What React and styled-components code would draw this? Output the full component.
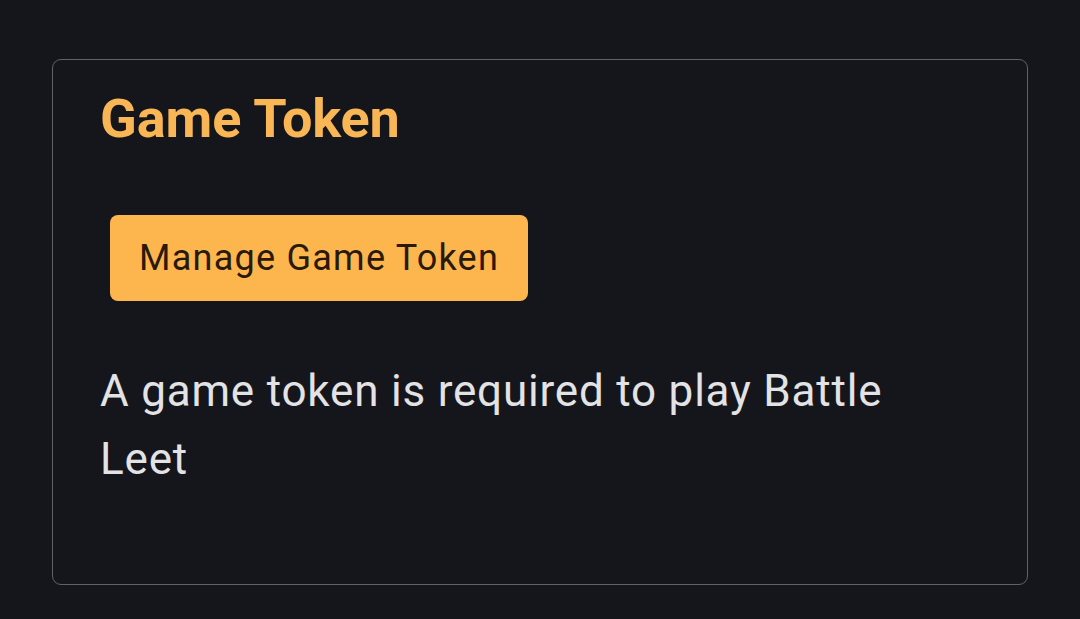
import React from "react";
import styled, { createGlobalStyle } from "styled-components";

const GlobalStyle = createGlobalStyle`
  html, body {
    margin: 0;
    padding: 0;
    background: #15161b;
  }
  body {
    font-family: Roboto, "Liberation Sans", sans-serif;
  }
`;

const Page = styled.div`
  padding: 59px 52px 35px 52px;
`;

const Card = styled.section`
  box-sizing: border-box;
  width: 976px;
  height: 526px;
  border: 1.5px solid #616267;
  border-radius: 9px;
  padding: 25px 48px 0 47px;
  display: flex;
  flex-direction: column;
  align-items: flex-start;
`;

const Title = styled.h2`
  margin: 0;
  font-size: 54px;
  line-height: 67px;
  font-weight: 700;
  letter-spacing: -0.1px;
  color: #f9b655;
`;

const Button = styled.button`
  margin: 63px 0 0 10px;
  height: 86px;
  padding: 0 29px;
  border: none;
  border-radius: 8px;
  background: #fdb64e;
  color: #2a1907;
  font-family: inherit;
  font-size: 36px;
  font-weight: 400;
  letter-spacing: 1.25px;
  cursor: pointer;
`;

const Text = styled.p`
  margin: 56px 0 0 0;
  max-width: 860px;
  font-size: 44px;
  line-height: 68px;
  letter-spacing: 0.8px;
  color: #e3e3e6;
`;

export default function App() {
  return (
    <Page>
      <GlobalStyle />
      <Card>
        <Title>Game Token</Title>
        <Button>Manage Game Token</Button>
        <Text>A game token is required to play Battle Leet</Text>
      </Card>
    </Page>
  );
}
